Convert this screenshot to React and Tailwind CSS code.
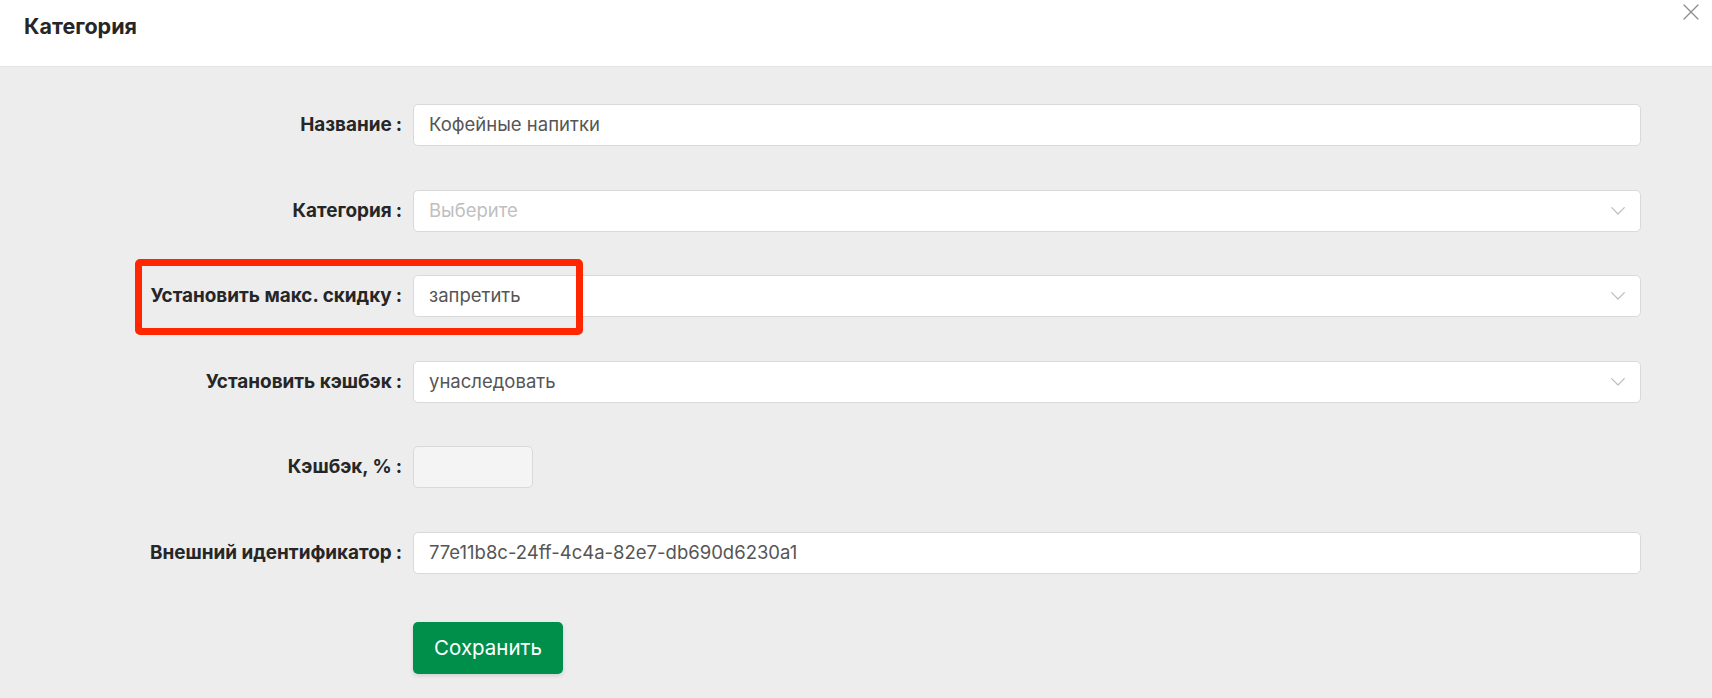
import React from "react";

function Chevron() {
  return (
    <svg width="14" height="8" viewBox="0 0 14 8" fill="none" className="shrink-0">
      <path d="M0.7 0.7L7 7L13.3 0.7" stroke="#bdbdbd" strokeWidth="1.2" strokeLinecap="round" strokeLinejoin="round" />
    </svg>
  );
}

function Label({ children }) {
  return (
    <div className="w-[413px] shrink-0 pr-[11px] text-right text-[18.9px] font-bold leading-[22px] text-[#262626]">
      {children}
      <span className="ml-[4px]">:</span>
    </div>
  );
}

function TextBox({ value }) {
  return (
    <div className="flex h-[42px] flex-1 items-center rounded-[5px] border border-[#d9d9d9] bg-white px-[15px] text-[18.5px] text-[#555555]">
      {value}
    </div>
  );
}

function SelectBox({ value, placeholder }) {
  return (
    <div className="flex h-[42px] flex-1 items-center justify-between rounded-[5px] border border-[#d9d9d9] bg-white pl-[15px] pr-[15px] text-[18.5px]">
      {value ? (
        <span className="text-[#555555]">{value}</span>
      ) : (
        <span className="text-[#bfbfbf]">{placeholder}</span>
      )}
      <Chevron />
    </div>
  );
}

export default function App() {
  return (
    <div className="min-h-[698px] bg-[#ededed] font-['Inter',sans-serif]">
      <header className="relative h-[67px] border-b border-[#e4e4e4] bg-white pl-[24px] pt-[15px]">
        <h1 className="text-[21.5px] font-bold leading-[22px] text-[#262626]">Категория</h1>
        <button className="absolute right-[13px] top-[4px] p-0">
          <svg width="16" height="16" viewBox="0 0 16 16" fill="none">
            <path d="M1 1L15 15M15 1L1 15" stroke="#8c8c8c" strokeWidth="1.3" strokeLinecap="round" />
          </svg>
        </button>
      </header>

      <div className="flex flex-col gap-[43.5px] pr-[71px] pt-[37.3px]">
        <div className="flex items-center">
          <Label>Название</Label>
          <TextBox value="Кофейные напитки" />
        </div>
        <div className="flex items-center">
          <Label>Категория</Label>
          <SelectBox placeholder="Выберите" />
        </div>
        <div className="relative flex items-center">
          <Label>Установить макс. скидку</Label>
          <SelectBox value="запретить" />
          <div className="pointer-events-none absolute left-[135px] top-[-16.5px] h-[76px] w-[448px] rounded-[5px] border-[7px] border-[#ff2600]" />
        </div>
        <div className="flex items-center">
          <Label>Установить кэшбэк</Label>
          <SelectBox value="унаследовать" />
        </div>
        <div className="flex items-center">
          <Label>Кэшбэк, %</Label>
          <div className="h-[42px] w-[120px] rounded-[5px] border border-[#d9d9d9] bg-[#f4f4f4]" />
        </div>
        <div className="flex items-center">
          <Label>Внешний идентификатор</Label>
          <TextBox value="77e11b8c-24ff-4c4a-82e7-db690d6230a1" />
        </div>
        <div className="mt-[5px] flex">
          <div className="w-[413px] shrink-0" />
          <button className="h-[52px] w-[150px] rounded-[5px] bg-[#008f4b] text-[20.5px] text-white shadow-[0_2px_4px_rgba(0,0,0,0.12)]">
            Сохранить
          </button>
        </div>
      </div>
    </div>
  );
}
